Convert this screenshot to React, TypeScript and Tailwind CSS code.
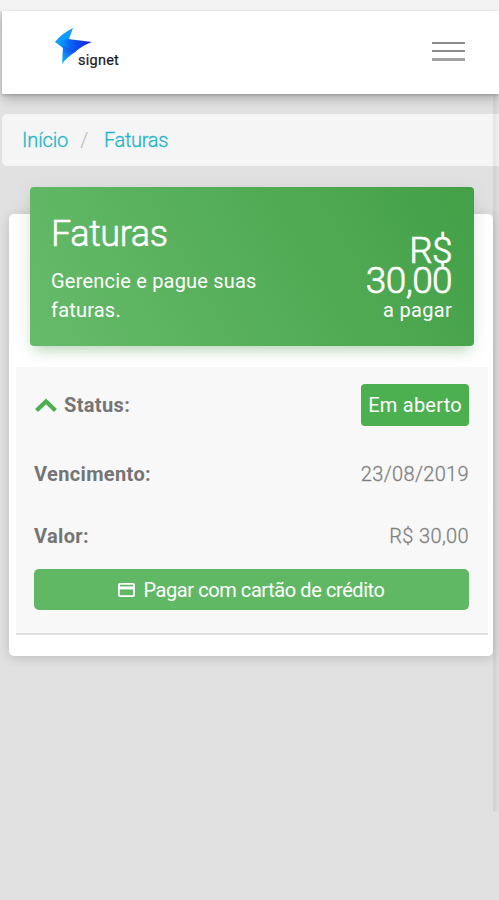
import { ReactNode } from "react";

function Logo() {
  return (
    <div className="flex h-[42px] w-[68px] items-end">
      <svg width="38" height="36" viewBox="0 0 38 36" className="self-start shrink-0">
        <defs>
          <linearGradient id="wing" x1="0" y1="0" x2="1" y2="0">
            <stop offset="0" stopColor="#0cb4ff" />
            <stop offset="0.4" stopColor="#0a66f5" />
            <stop offset="1" stopColor="#1616d8" />
          </linearGradient>
          <linearGradient id="tail" x1="0.7" y1="0" x2="0" y2="1">
            <stop offset="0" stopColor="#0c3ff0" />
            <stop offset="1" stopColor="#12c4ff" />
          </linearGradient>
        </defs>
        <path d="M18 0 Q6 6 0 14 L10 17 L14 11 Z" fill="#129cff" />
        <path d="M0 14 L13 11 L37 14 Q28 17 20 24 L8 20 Z" fill="url(#wing)" />
        <path d="M8 18 L21 23.5 Q12 29 7 36 Z" fill="url(#tail)" />
      </svg>
      <span className="-ml-[15px] text-[14.5px] leading-[18px] tracking-[0.25px] text-[#181824] [-webkit-text-stroke:0.2px_#181824]">
        signet
      </span>
    </div>
  );
}

function Row(props: { label: string; children: ReactNode }) {
  return (
    <div className="flex items-center justify-between">
      <span className="font-bold tracking-[0.36px] text-[#757575]">{props.label}</span>
      <span className="font-light tracking-[0.35px] text-[#7c7c7c] [-webkit-text-stroke:0.3px_#8a8a8a]">
        {props.children}
      </span>
    </div>
  );
}

function App() {
  return (
    <div className="relative h-[900px] w-full overflow-hidden bg-[#e1e1e1] font-[Roboto,sans-serif] text-[20px] leading-[30px]">
      <div className="h-[11px] bg-[#f3f3f3]" />
      <header className="relative ml-[2px] flex h-[83px] items-start justify-between bg-white pl-[53px] pr-[34px] pt-[17px] shadow-[0_6px_10px_-1px_rgba(0,0,0,0.22),0_1px_3px_rgba(0,0,0,0.2)]">
        <Logo />
        <button className="mt-[14px] flex flex-col gap-[6px]">
          <span className="h-[2px] w-[33px] bg-[#8b8b8b]" />
          <span className="h-[2px] w-[33px] bg-[#8b8b8b]" />
          <span className="h-[3px] w-[33px] bg-[#a2a2a2]" />
        </button>
      </header>

      <nav className="ml-[2px] mt-[20px] flex h-[52px] items-center rounded-l-[5px] bg-[#f5f5f5] pl-[20px] font-light tracking-[-0.3px] text-[#22b4c8] [-webkit-text-stroke:0.3px_#22b4c8]">
        <a className="tracking-[-0.1px]">Início</a>
        <span className="ml-[12px] mr-[16px] text-[#b5b5b5] [-webkit-text-stroke:0px]">/</span>
        <a>Faturas</a>
      </nav>

      <main className="ml-[9px] mr-[6px] mt-[48px] h-[442px] rounded-[5px] bg-white pl-[7px] pr-[5px] shadow-[0_2px_12px_rgba(0,0,0,0.16)]">
        <section className="relative -top-[27px] ml-[14px] mr-[14px] flex h-[159px] justify-between rounded-[4px] bg-linear-[60deg,#66bb6a,#43a047] pl-[21px] pr-[22px] text-white shadow-[0_4px_20px_rgba(0,0,0,0.08),0_8px_12px_-5px_rgba(76,175,80,0.35)]">
          <div className="w-[230px] pt-[26px]">
            <h1 className="text-[36px] font-light leading-[42px] tracking-[-0.4px] [-webkit-text-stroke:0.6px_white]">
              Faturas
            </h1>
            <p className="mt-[12px] leading-[29px] tracking-[0.2px]">Gerencie e pague suas faturas.</p>
          </div>
          <div className="w-[100px] pt-[49px] text-right">
            <p className="text-[37px] font-light leading-[30px] tracking-[-0.6px] [-webkit-text-stroke:0.7px_white]">
              R$ 30,00
            </p>
            <p className="leading-[29px] tracking-[0.3px]">a pagar</p>
          </div>
        </section>

        <section className="-mt-[6px] h-[268px] border-b-2 border-[#dedede] bg-[#f8f8f8] pl-[18px] pr-[19px] pt-[17px]">
          <div className="flex h-[42px] items-center justify-between">
            <span className="flex items-center font-bold tracking-[0.36px] text-[#757575]">
              <svg width="24" height="16" viewBox="0 0 24 16" className="mr-[6px]">
                <path d="M2.5 13.5 L12 4.5 L21.5 13.5" fill="none" stroke="#4caf50" strokeWidth="4.2" />
              </svg>
              Status:
            </span>
            <span className="flex h-[42px] items-center rounded-[4px] bg-[#4caf50] px-[7px] tracking-[0.25px] text-white">
              Em aberto
            </span>
          </div>
          <div className="mt-[33px]">
            <Row label="Vencimento:">23/08/2019</Row>
          </div>
          <div className="mt-[32px]">
            <Row label="Valor:">R$ 30,00</Row>
          </div>
          <button className="mt-[18px] flex h-[41px] w-full items-center justify-center rounded-[5px] bg-[#61b864] tracking-[-0.42px] text-white">
            <svg width="17" height="14" viewBox="0 0 17 14" className="mr-[8px]">
              <rect x="0.9" y="0.9" width="15.2" height="12.2" rx="1.2" fill="none" stroke="#fff" strokeWidth="1.8" />
              <path d="M1 4.9 H16" stroke="#fff" strokeWidth="3" />
            </svg>
            Pagar com cartão de crédito
          </button>
        </section>
      </main>

      {/* scrollbar */}
      <div className="absolute right-0 top-[94px] h-[718px] w-[6px] rounded-b-[3px] bg-linear-to-r from-black/8 to-black/1" />
    </div>
  );
}
export default App;
